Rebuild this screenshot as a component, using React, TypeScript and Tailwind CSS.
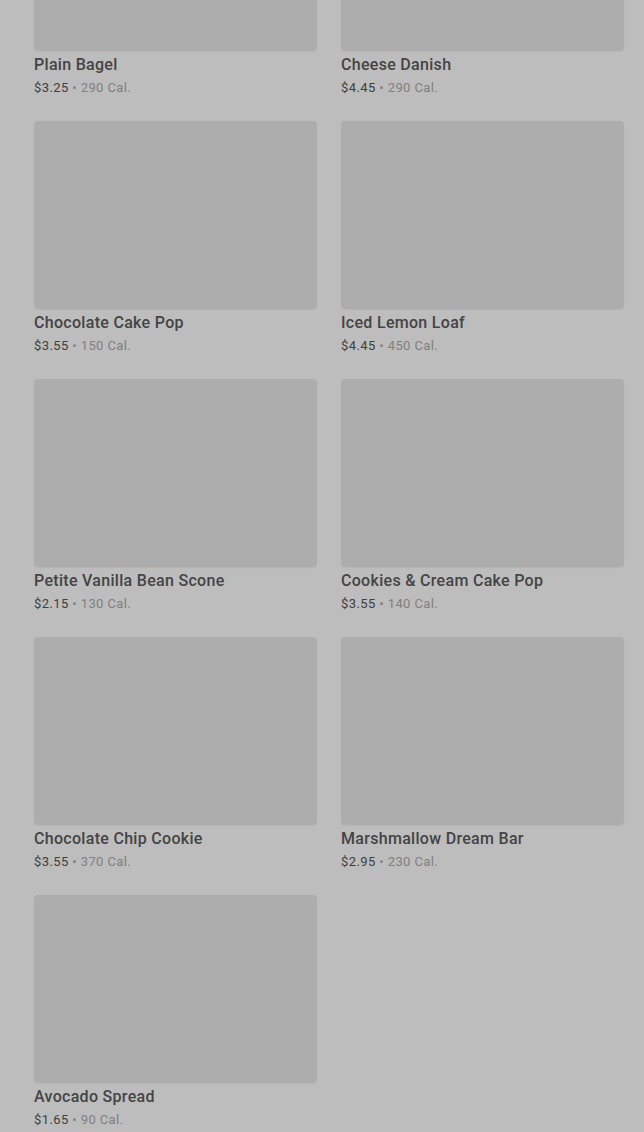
const items = [
  { name: 'Plain Bagel', price: '$3.25', cal: '290 Cal.' },
  { name: 'Cheese Danish', price: '$4.45', cal: '290 Cal.' },
  { name: 'Chocolate Cake Pop', price: '$3.55', cal: '150 Cal.' },
  { name: 'Iced Lemon Loaf', price: '$4.45', cal: '450 Cal.' },
  { name: 'Petite Vanilla Bean Scone', price: '$2.15', cal: '130 Cal.' },
  { name: 'Cookies & Cream Cake Pop', price: '$3.55', cal: '140 Cal.' },
  { name: 'Chocolate Chip Cookie', price: '$3.55', cal: '370 Cal.' },
  { name: 'Marshmallow Dream Bar', price: '$2.95', cal: '230 Cal.' },
  { name: 'Avocado Spread', price: '$1.65', cal: '90 Cal.' },
];

export default function App() {
  return (
    <div
      className="h-[1132px] overflow-hidden bg-[#bdbdbd]"
      style={{ fontFamily: 'Roboto, "Noto Sans", Arial, sans-serif' }}
    >
      <div className="mt-[-137px] grid grid-cols-2 gap-x-6 gap-y-6 pl-[34px] pr-5">
        {items.map((it) => (
          <ProductCard key={it.name} {...it} />
        ))}
      </div>
    </div>
  );
}

function ProductCard({ name, price, cal }: { name: string; price: string; cal: string }) {
  return (
    <div>
      <div className="h-[188px] rounded-sm bg-[#adadad] shadow-[0_1px_1px_rgba(0,0,0,0.04)]" />
      <div className="mt-1 text-[16px] leading-5 font-medium text-[#444] tracking-[0.3px]">{name}</div>
      <div className="mt-1 text-[13px] leading-[18px] text-[#404040] tracking-[0.4px]">
        {price}
        <span className="text-[#808080]"> • {cal}</span>
      </div>
    </div>
  );
}
